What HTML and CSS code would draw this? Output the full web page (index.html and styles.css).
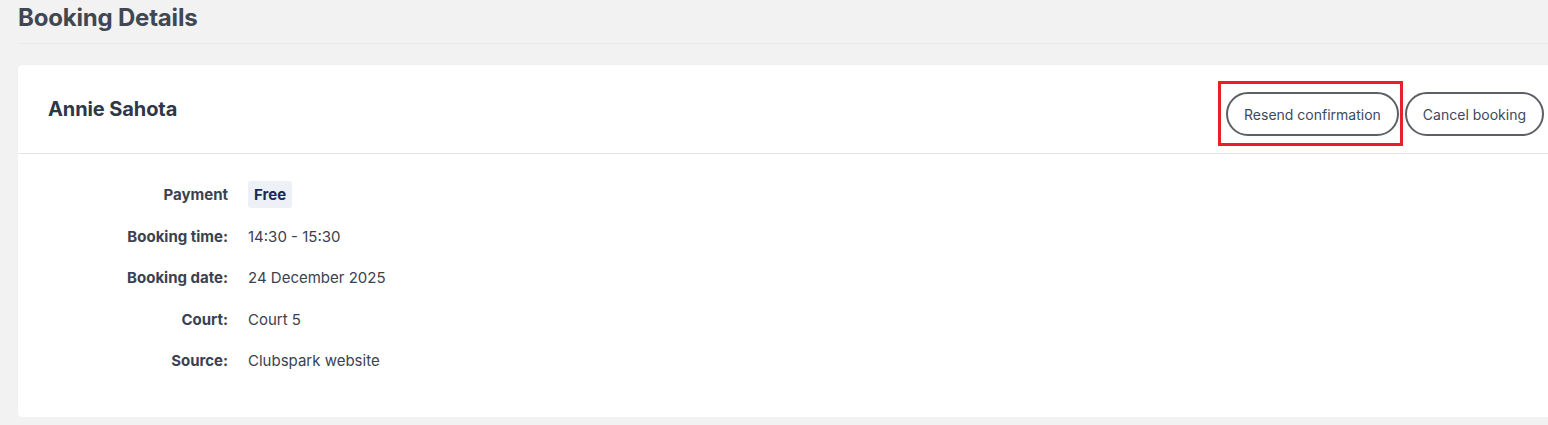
FILE: index.html
```html
<!DOCTYPE html>
<html>
<head>
<meta charset="utf-8">
<link rel="stylesheet" href="styles.css">
</head>
<body>
<div class="page">
  <h1 class="page-title">Booking Details</h1>
  <div class="card">
    <div class="card-header">
      <h2 class="name">Annie Sahota</h2>
      <div class="actions">
        <span class="highlight"><button class="btn">Resend confirmation</button></span>
        <button class="btn">Cancel booking</button>
      </div>
    </div>
    <div class="card-body">
      <div class="row"><div class="label">Payment</div><div class="value"><span class="badge">Free</span></div></div>
      <div class="row"><div class="label">Booking time:</div><div class="value">14:30 - 15:30</div></div>
      <div class="row"><div class="label">Booking date:</div><div class="value">24 December 2025</div></div>
      <div class="row"><div class="label">Court:</div><div class="value">Court 5</div></div>
      <div class="row"><div class="label">Source:</div><div class="value">Clubspark website</div></div>
    </div>
  </div>
</div>
</body>
</html>
```
FILE: styles.css
```css
html, body {
  margin: 0;
  padding: 0;
  overflow: hidden;
  background: #f2f2f2;
  font-family: Inter, "Noto Sans", sans-serif;
}
.page {
  padding: 0 18px;
}
.page-title {
  margin: 0 -33px 0 0;
  height: 44px;
  box-sizing: border-box;
  padding-top: 3px;
  font-size: 24px;
  font-weight: 700;
  color: #3f4852;
  line-height: 30px;
  border-bottom: 1px solid #ebebeb;
  letter-spacing: -0.2px;
}
.card {
  margin-top: 21px;
  margin-right: -33px;
  background: #fff;
  border-radius: 4px;
  box-shadow: 0 0 1px rgba(0,0,0,0.06);
}
.card-header {
  height: 89px;
  box-sizing: border-box;
  padding: 0 19px 0 30px;
  display: flex;
  align-items: center;
  justify-content: space-between;
  border-bottom: 1px solid #e4e4e4;
}
.name {
  margin: 0;
  font-size: 20px;
  font-weight: 700;
  color: #2e3747;
  letter-spacing: -0.1px;
}
.actions {
  display: flex;
  gap: 6px;
  margin-top: 10px;
}
.highlight {
  position: relative;
  display: inline-flex;
}
.highlight::after {
  content: "";
  position: absolute;
  top: -11px;
  left: -8px;
  right: -4px;
  bottom: -10px;
  border: 3px solid #e8202a;
  pointer-events: none;
}
.btn {
  height: 44px;
  padding: 0 16px;
  border: 2px solid #5c6066;
  border-radius: 22px;
  background: #fff;
  font-family: Inter, "Noto Sans", sans-serif;
  font-size: 14px;
  color: #3d4a5c;
  cursor: pointer;
}
.card-body {
  padding: 20px 0 35px;
}
.row {
  display: grid;
  grid-template-columns: 210px 1fr;
  column-gap: 20px;
  height: 41.5px;
  align-items: center;
  font-size: 15px;
  color: #3a4250;
}
.label {
  text-align: right;
  font-weight: 700;
}
.badge {
  display: inline-block;
  padding: 4px 6px;
  background: #edf0f7;
  border-radius: 3px;
  font-weight: 700;
  color: #1c2a58;
}
```
